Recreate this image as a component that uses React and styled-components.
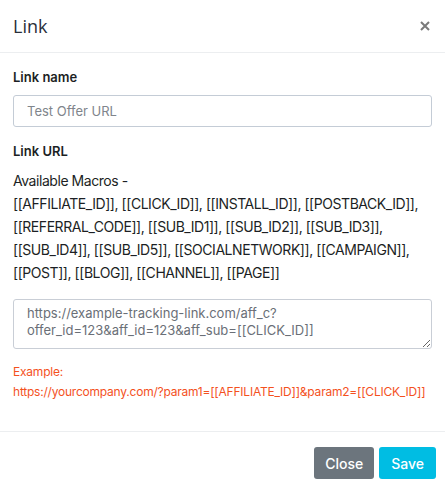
import styled, { createGlobalStyle } from "styled-components";

const Global = createGlobalStyle`
  * { box-sizing: border-box; }
  body {
    margin: 0;
    background: #fff;
    font-family: Inter, "Noto Sans", sans-serif;
    color: #212529;
  }
`;

const Modal = styled.div`
  width: 445px;
  height: 492px;
  display: flex;
  flex-direction: column;
  background: #fff;
`;

const Header = styled.div`
  flex-shrink: 0;
  height: 53px;
  padding: 0 13px;
  display: flex;
  align-items: center;
  justify-content: space-between;
  border-bottom: 1px solid #eceef0;
`;

const Title = styled.h5`
  margin: 0;
  font-family: "Open Sans", sans-serif;
  font-size: 18px;
  font-weight: 500;
  color: #2a2f3a;
`;

const CloseX = styled.button`
  border: 0;
  background: none;
  padding: 0;
  width: 14px;
  height: 14px;
  display: flex;
  align-items: center;
  justify-content: center;
  cursor: pointer;
`;

const Body = styled.div`
  flex: 1;
  padding: 14px 13px 0;
`;

const Label = styled.div`
  font-size: 13px;
  line-height: 20px;
  font-weight: 600;
  color: #1c1f24;
  margin-bottom: 8px;
`;

const Input = styled.input`
  display: block;
  width: 100%;
  height: 32px;
  padding: 0 13px;
  border: 1px solid #c4ccd6;
  border-radius: 3px;
  font-family: inherit;
  font-size: 13px;
  color: #495057;
  margin-bottom: 14px;
  &::placeholder { color: #80858c; }
`;

const Macros = styled.p`
  margin: 0 0 15px;
  font-size: 14px;
  line-height: 23px;
  letter-spacing: -0.45px;
  white-space: nowrap;
  color: #1c1f24;
`;

const TextArea = styled.textarea`
  display: block;
  width: 100%;
  height: 50px;
  padding: 5px 13px;
  border: 1px solid #c9ced6;
  border-radius: 3px;
  font-family: inherit;
  font-size: 13px;
  line-height: 17px;
  color: #6a6f77;
  resize: vertical;
  margin-bottom: 13px;
`;

const Hint = styled.div`
  font-size: 12px;
  line-height: 20px;
  letter-spacing: -0.22px;
  white-space: nowrap;
  color: #f4511e;
`;

const Footer = styled.div`
  flex-shrink: 0;
  border-top: 1px solid #eceef0;
  padding: 15px 9px 0;
  height: 61px;
  display: flex;
  justify-content: flex-end;
  gap: 5px;
`;

const Button = styled.button`
  height: 32px;
  padding: 0 ${(p) => p.$pad}px;
  border: 0;
  border-radius: 3px;
  background: ${(p) => p.$bg};
  color: #fff;
  font-family: inherit;
  font-size: 14px;
  font-weight: 500;
  cursor: pointer;
`;

const macroLines = [
  "[[AFFILIATE_ID]], [[CLICK_ID]], [[INSTALL_ID]], [[POSTBACK_ID]],",
  "[[REFERRAL_CODE]], [[SUB_ID1]], [[SUB_ID2]], [[SUB_ID3]],",
  "[[SUB_ID4]], [[SUB_ID5]], [[SOCIALNETWORK]], [[CAMPAIGN]],",
  "[[POST]], [[BLOG]], [[CHANNEL]], [[PAGE]]",
];

export default function App() {
  return (
    <>
      <Global />
      <Modal>
        <Header>
          <Title>Link</Title>
          <CloseX aria-label="Close">
            <svg width="10" height="10" viewBox="0 0 10 10">
              <path d="M1 1L9 9M9 1L1 9" stroke="#7a7a7a" strokeWidth="2" />
            </svg>
          </CloseX>
        </Header>
        <Body>
          <Label>Link name</Label>
          <Input placeholder="Test Offer URL" />
          <Label>Link URL</Label>
          <Macros>
            Available Macros -
            {macroLines.map((l) => (
              <span key={l}>
                <br />
                {l}
              </span>
            ))}
          </Macros>
          <TextArea
            defaultValue="https://example-tracking-link.com/aff_c?offer_id=123&aff_id=123&aff_sub=[[CLICK_ID]]"
          />
          <Hint>
            Example:
            <br />
            https://yourcompany.com/?param1=[[AFFILIATE_ID]]&amp;param2=[[CLICK_ID]]
          </Hint>
        </Body>
        <Footer>
          <Button $bg="#6c757d" $pad={11}>Close</Button>
          <Button $bg="#00bde3" $pad={12}>Save</Button>
        </Footer>
      </Modal>
    </>
  );
}
